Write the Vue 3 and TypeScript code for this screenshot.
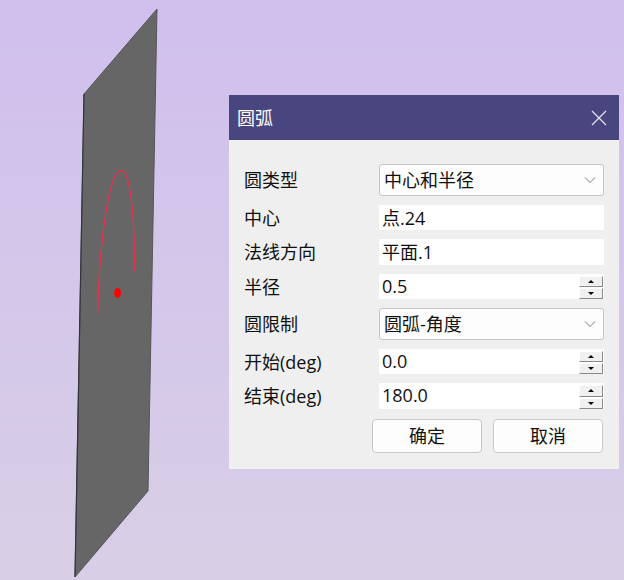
<script setup lang="ts">
interface Row {
  label: string
  kind: 'combo' | 'text' | 'spin'
  value: string
  height: number
}

const rows: Row[] = [
  { label: '圆类型', kind: 'combo', value: '中心和半径', height: 32 },
  { label: '中心', kind: 'text', value: '点.24', height: 25 },
  { label: '法线方向', kind: 'text', value: '平面.1', height: 26 },
  { label: '半径', kind: 'spin', value: '0.5', height: 25 },
  { label: '圆限制', kind: 'combo', value: '圆弧-角度', height: 32 },
  { label: '开始(deg)', kind: 'spin', value: '0.0', height: 25 },
  { label: '结束(deg)', kind: 'spin', value: '180.0', height: 26 },
]
</script>

<template>
  <div class="desktop">
    <svg class="scene" width="624" height="580" viewBox="0 0 624 580">
      <polygon points="84,94 157,9 148,491 75,577" fill="#666666" stroke="#55555c" stroke-width="1" />
      <path d="M84 94 L75 577" fill="none" stroke="#34343c" stroke-width="1.2" />
      <path d="M97.7 314 C99 250 108 170.5 121.3 170.5 C130 170.5 135 215 134.4 271" fill="none" stroke="#e8304e" stroke-width="1.3" />
      <ellipse cx="117.6" cy="293" rx="3.4" ry="5" fill="#ff0000" />
    </svg>

    <section class="dialog">
      <header class="title-bar">
        <span class="title">圆弧</span>
        <svg class="close" width="16" height="16" viewBox="0 0 16 16">
          <path d="M1 1 L15 15 M15 1 L1 15" stroke="#e6e6f0" stroke-width="1.2" fill="none" />
        </svg>
      </header>

      <div class="body">
        <div class="form">
          <template v-for="row in rows" :key="row.label">
            <label class="label" :style="{ height: row.height + 'px' }">{{ row.label }}</label>
            <div v-if="row.kind === 'combo'" class="field combo" :style="{ height: row.height + 'px' }">
              <span class="value">{{ row.value }}</span>
              <svg width="12" height="8" viewBox="0 0 12 8">
                <path d="M1 1.5 L6 6.5 L11 1.5" stroke="#7a7a7a" stroke-width="1" fill="none" />
              </svg>
            </div>
            <div v-else class="field input" :style="{ height: row.height + 'px' }">
              <span class="value">{{ row.value }}</span>
              <div v-if="row.kind === 'spin'" class="spin">
                <span class="spin-btn"><i class="arrow up"></i></span>
                <span class="spin-btn"><i class="arrow down"></i></span>
              </div>
            </div>
          </template>
        </div>

        <div class="actions">
          <button class="btn" type="button">确定</button>
          <button class="btn" type="button">取消</button>
        </div>
      </div>
    </section>
  </div>
</template>

<style>
html,
body {
  margin: 0;
}
</style>

<style scoped>
.desktop {
  position: relative;
  width: 624px;
  height: 580px;
  overflow: hidden;
  background: linear-gradient(180deg, #d0bfed 0%, #d8cfe6 100%);
  font-family: "Open Sans", "Noto Sans CJK SC", sans-serif;
  color: #111;
}
.scene {
  position: absolute;
  left: 0;
  top: 0;
}
.dialog {
  position: absolute;
  left: 229px;
  top: 95px;
  width: 390px;
  height: 374px;
  background: #efefef;
}
.title-bar {
  height: 45px;
  background: #49467f;
  display: flex;
  align-items: center;
  justify-content: space-between;
  padding: 0 12px 2px 8px;
  box-sizing: border-box;
}
.title {
  font-size: 18px;
  color: #fff;
}
.close {
  display: block;
  margin-top: 2px;
}
.body {
  padding: 24px 15px 16px;
}
.form {
  display: grid;
  grid-template-columns: 135px 225px;
  row-gap: 9px;
}
.label {
  display: flex;
  align-items: center;
  font-size: 18px;
  box-sizing: border-box;
  padding-bottom: 2px;
}
.field {
  display: flex;
  align-items: center;
  justify-content: space-between;
  box-sizing: border-box;
  font-size: 18px;
  padding-bottom: 2px;
}
.combo {
  background: #fdfdfd;
  border: 1px solid #c4c4c4;
  border-radius: 3px;
  padding: 0 7px 2px 4px;
}
.combo svg {
  margin-top: 2px;
}
.input {
  background: #fff;
  padding-left: 3px;
  position: relative;
}
.spin {
  position: absolute;
  right: 1px;
  top: 2px;
  bottom: 0;
  width: 24px;
  display: flex;
  flex-direction: column;
  gap: 1px;
}
.spin-btn {
  flex: 1;
  display: flex;
  align-items: center;
  justify-content: center;
  background: #f0f0f0;
  border-top: 1px solid #fff;
  border-left: 1px solid #fff;
  border-right: 1px solid #8a8a8a;
  border-bottom: 1px solid #8a8a8a;
  box-sizing: border-box;
}
.arrow {
  width: 0;
  height: 0;
  border-left: 3px solid transparent;
  border-right: 3px solid transparent;
}
.arrow.up {
  border-bottom: 3px solid #000;
}
.arrow.down {
  border-top: 3px solid #000;
}
.actions {
  display: flex;
  justify-content: flex-end;
  gap: 11px;
  margin-top: 10px;
  padding-right: 1px;
}
.btn {
  width: 110px;
  height: 34px;
  background: #fdfdfd;
  border: 1px solid #c8c8c8;
  border-radius: 4px;
  font: inherit;
  font-size: 18px;
  color: #111;
  padding: 0 0 3px;
}
</style>
